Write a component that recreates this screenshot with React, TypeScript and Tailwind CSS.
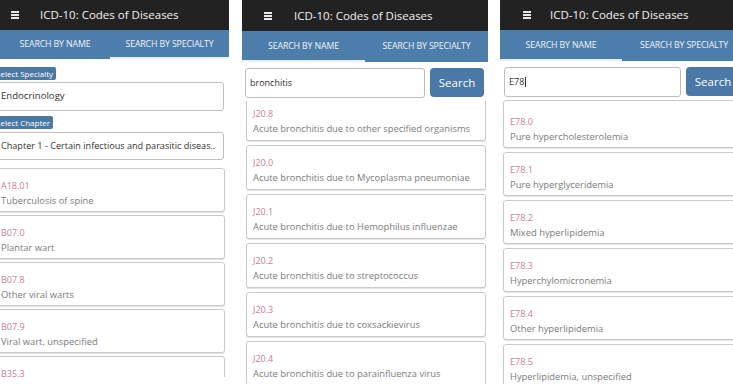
const dark = 'bg-[#222222]';

function Hamburger() {
  return (
    <svg width="8" height="8" viewBox="0 0 8 8" className="shrink-0">
      <rect x="0" y="0" width="8" height="2" fill="#e8e8e8" />
      <rect x="0" y="3" width="8" height="2" fill="#e8e8e8" />
      <rect x="0" y="6" width="8" height="2" fill="#e8e8e8" />
    </svg>
  );
}

function Header({ h, iconLeft, titleGap }: { h: string; iconLeft: string; titleGap: string }) {
  return (
    <div className={`${h} ${dark} ${iconLeft} flex items-center shrink-0`}>
      <Hamburger />
      <span className={`${titleGap} text-[11.5px] text-[#f2f2f2] whitespace-nowrap leading-none`}>
        ICD-10: Codes of Diseases
      </span>
    </div>
  );
}

function Tabs({ h, first, active }: { h: string; first: string; active: 0 | 1 }) {
  const label = 'text-[8.8px] tracking-[-0.15px] text-[#eef3f8] whitespace-nowrap uppercase';
  return (
    <div className={`${h} bg-[#4d7dab] flex shrink-0`}>
      <div className={`${first} relative flex items-center justify-center`}>
        <span className={label}>Search by name</span>
        {active === 0 && <div className="absolute left-0 right-0 bottom-0 h-[2.5px] bg-[#e9eff6]" />}
      </div>
      <div className="flex-1 relative flex items-center justify-center">
        <span className={label}>Search by specialty</span>
        {active === 1 && <div className="absolute left-0 right-0 bottom-0 h-[2.5px] bg-[#e9eff6]" />}
      </div>
    </div>
  );
}

function Card({ code, desc, className = '' }: { code: string; desc: string; className?: string }) {
  return (
    <div
      className={`shrink-0 border border-[#c9c9c9] rounded-[3px] bg-white shadow-[0_1px_1px_rgba(0,0,0,0.12)] pl-[6px] ${className}`}
    >
      <div className="text-[9px] leading-[12px] text-[#c4809a]">{code}</div>
      <div className="mt-[3px] text-[9.4px] leading-[12px] text-[#7c7c7c] whitespace-nowrap">{desc}</div>
    </div>
  );
}

function SearchRow({ pad, inputW, value, caret }: { pad: string; inputW: string; value: string; caret?: boolean }) {
  return (
    <div className={`flex items-start ${pad} shrink-0`}>
      <div className={`${inputW} h-[30px] border border-[#bdbdbd] rounded-[3px] flex items-center pl-[4px] text-[9px] text-[#333]`}>
        {value}
        {caret && <span className="inline-block w-[1.5px] h-[10px] bg-[#333] ml-[0.5px]" />}
      </div>
      <div className="ml-[5px] w-[54px] h-[29px] shrink-0 rounded-[4px] bg-[#4a79a7] flex items-center justify-center text-[11.5px] text-white">
        Search
      </div>
    </div>
  );
}

function SpecialtyPanel() {
  const badge = 'h-[13px] w-fit bg-[#4a79a6] text-white text-[8px] leading-[13px] pl-[2px] pr-[3px] rounded-[2px]';
  const box = 'border border-[#c0c0c0] rounded-[3px] flex items-center pl-[6px] text-[#333] whitespace-nowrap';
  const cards = [
    ['A18.01', 'Tuberculosis of spine'],
    ['B07.0', 'Plantar wart'],
    ['B07.8', 'Other viral warts'],
    ['B07.9', 'Viral wart, unspecified'],
    ['B35.3', 'Tinea pedis'],
  ];
  return (
    <div className="w-[229px] h-[377px] overflow-hidden shrink-0 flex flex-col bg-white">
      <Header h="h-[30px]" iconLeft="pl-[11px]" titleGap="ml-[21px]" />
      <Tabs h="h-[29px]" first="w-[110px]" active={1} />
      <div className="-ml-[6px] w-[230px] flex flex-col">
        <div className={`mt-[8px] ${badge}`}>Select Specialty</div>
        <div className={`mt-[2px] h-[29px] text-[9.6px] ${box}`}>Endocrinology</div>
        <div className={`mt-[5px] ${badge}`}>Select Chapter</div>
        <div className={`mt-[3px] h-[28px] text-[9.1px] ${box}`}>
          Chapter 1 - Certain infectious and parasitic diseas..
        </div>
        <div className="mt-[8px] flex flex-col gap-[3px] w-[231px]">
          {cards.map(([c, d]) => (
            <Card key={c} code={c} desc={d} className="h-[44px] pt-[11px]" />
          ))}
        </div>
      </div>
    </div>
  );
}

function BronchitisPanel() {
  const cards = [
    ['J20.8', 'Acute bronchitis due to other specified organisms'],
    ['J20.0', 'Acute bronchitis due to Mycoplasma pneumoniae'],
    ['J20.1', 'Acute bronchitis due to Hemophilus influenzae'],
    ['J20.2', 'Acute bronchitis due to streptococcus'],
    ['J20.3', 'Acute bronchitis due to coxsackievirus'],
    ['J20.4', 'Acute bronchitis due to parainfluenza virus'],
  ];
  return (
    <div className="ml-[13px] w-[246px] h-[384px] overflow-hidden shrink-0 flex flex-col bg-white">
      <Header h="h-[31px]" iconLeft="pl-[22px]" titleGap="ml-[22px]" />
      <Tabs h="h-[31px]" first="w-[123px]" active={0} />
      <div className="mt-[6px]">
        <SearchRow pad="pl-[3px]" inputW="w-[180px]" value="bronchitis" />
      </div>
      <div className="mt-[3px] flex-1 overflow-hidden">
        <div className="-mt-[5px] ml-[4px] w-[240px] flex flex-col gap-[4px]">
          {cards.map(([c, d]) => (
            <Card key={c} code={c} desc={d} className="h-[45px] pt-[11px]" />
          ))}
        </div>
      </div>
    </div>
  );
}

function HyperPanel() {
  const cards = [
    ['E78.0', 'Pure hypercholesterolemia'],
    ['E78.1', 'Pure hyperglyceridemia'],
    ['E78.2', 'Mixed hyperlipidemia'],
    ['E78.3', 'Hyperchylomicronemia'],
    ['E78.4', 'Other hyperlipidemia'],
    ['E78.5', 'Hyperlipidemia, unspecified'],
  ];
  return (
    <div className="ml-[12px] flex-1 h-[384px] overflow-hidden flex flex-col bg-white">
      <div className="w-[246px] flex flex-col h-full">
        <Header h="h-[30px]" iconLeft="pl-[23px]" titleGap="ml-[19px]" />
        <Tabs h="h-[31px]" first="w-[122px]" active={0} />
        <div className="mt-[6px]">
          <SearchRow pad="pl-[4px]" inputW="w-[177px]" value="E78" caret />
        </div>
        <div className="mt-[3px] ml-[3px] w-[240px] flex flex-col gap-[4px]">
          {cards.map(([c, d], i) => (
            <Card
              key={c}
              code={c}
              desc={d}
              className={i === 0 ? 'h-[48px] pt-[15px]' : 'h-[44px] pt-[11px]'}
            />
          ))}
        </div>
      </div>
    </div>
  );
}

export default function App() {
  return (
    <div className="w-[733px] h-[385px] overflow-hidden bg-white flex font-['Open_Sans',sans-serif]">
      <SpecialtyPanel />
      <BronchitisPanel />
      <HyperPanel />
    </div>
  );
}
